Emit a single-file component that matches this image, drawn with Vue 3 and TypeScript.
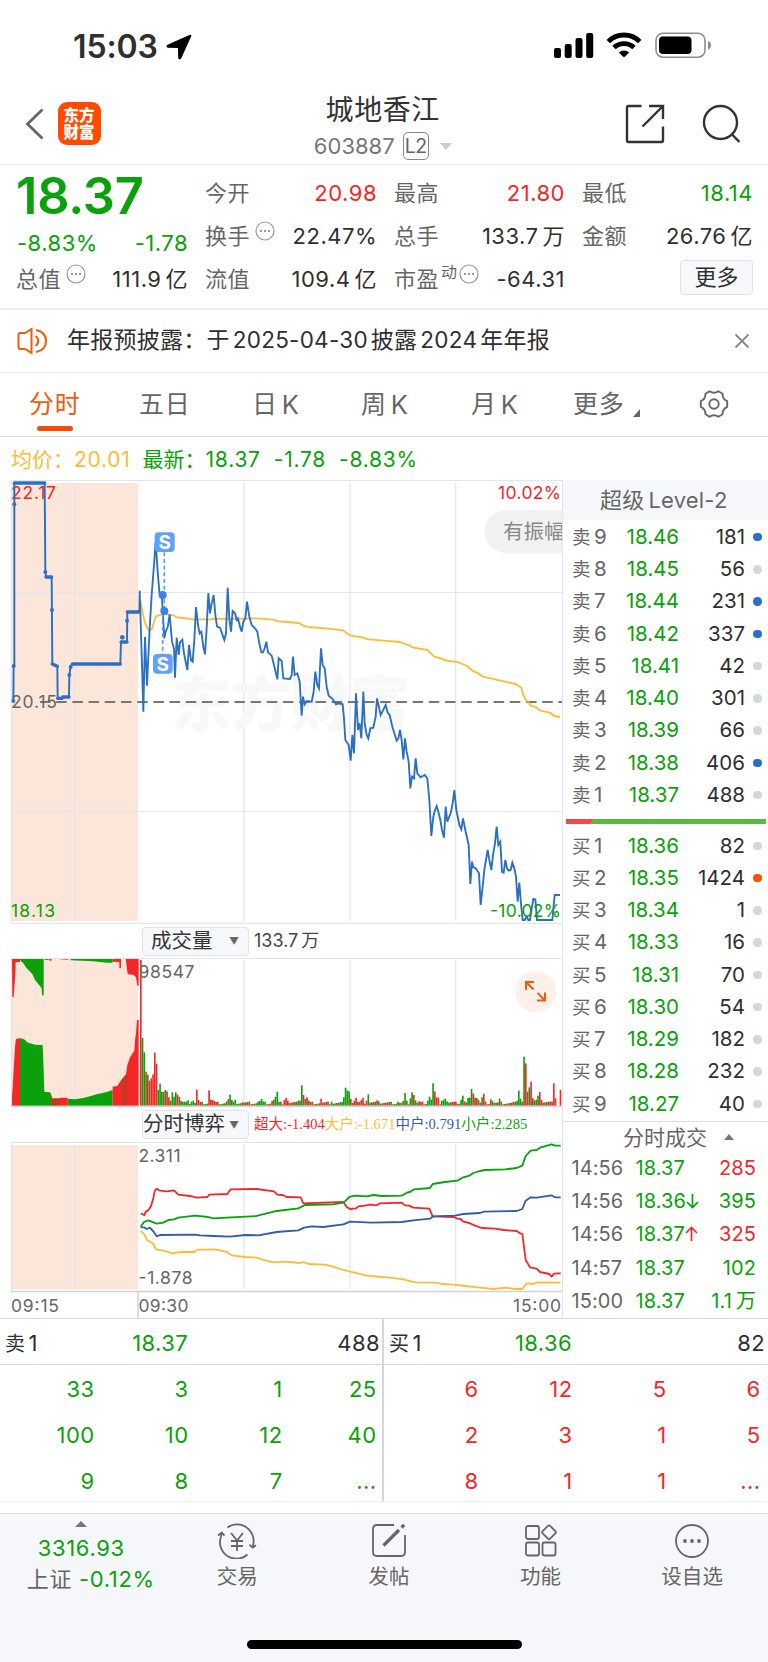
<script setup lang="ts">
interface Value { n: string; u?: string; cls?: string }
interface Stat extends Value { label: string; info?: boolean; sup?: string }
interface Order { side: string; level: number; price: string; qty: string; dot: string }

const statColumns: Stat[][] = [
  [
    { label: '今开', n: '20.98', cls: 'red' },
    { label: '换手', n: '22.47%', info: true },
    { label: '流值', n: '109.4', u: '亿' },
  ],
  [
    { label: '最高', n: '21.80', cls: 'red' },
    { label: '总手', n: '133.7', u: '万' },
    { label: '市盈', n: '-64.31', sup: '动', info: true },
  ],
  [
    { label: '最低', n: '18.14', cls: 'green' },
    { label: '金额', n: '26.76', u: '亿' },
  ],
]

const makeOrders = (side: string, rows: [number, string, string, string][]): Order[] =>
  rows.map(([level, price, qty, dot]) => ({ side, level, price, qty, dot }))

const sells = makeOrders('卖', [
  [9, '18.46', '181', 'blue'], [8, '18.45', '56', ''], [7, '18.44', '231', 'blue'],
  [6, '18.42', '337', 'blue'], [5, '18.41', '42', ''], [4, '18.40', '301', ''],
  [3, '18.39', '66', ''], [2, '18.38', '406', 'blue'], [1, '18.37', '488', ''],
])
const buys = makeOrders('买', [
  [1, '18.36', '82', ''], [2, '18.35', '1424', 'orange'], [3, '18.34', '1', ''],
  [4, '18.33', '16', ''], [5, '18.31', '70', ''], [6, '18.30', '54', ''],
  [7, '18.29', '182', ''], [8, '18.28', '232', ''], [9, '18.27', '40', ''],
])

const trades = [
  { t: '14:56', p: '18.37', a: '', q: '285', u: '', c: 'red' },
  { t: '14:56', p: '18.36', a: 'down', q: '395', u: '', c: 'green' },
  { t: '14:56', p: '18.37', a: 'up', q: '325', u: '', c: 'red' },
  { t: '14:57', p: '18.37', a: '', q: '102', u: '', c: 'green' },
  { t: '15:00', p: '18.37', a: '', q: '1.1', u: '万', c: 'green' },
]

const queues = [
  { side: '卖', price: '18.37', qty: '488', cls: 'green', cells: ['33', '3', '1', '25', '100', '10', '12', '40', '9', '8', '7', '...'] },
  { side: '买', price: '18.36', qty: '82', cls: 'red', cells: ['6', '12', '5', '6', '2', '3', '1', '5', '8', '1', '1', '...'] },
]

/* Chart data is kept at three times the drawn size and scaled down in each svg. */
const preMarket = '40,1008 41,903 43,903 43,354 134,354 136,620 138,636 155,636 157,897 165,903 172,905 173,1000 186,1000 188,996 207,996 208,930 212,903 217,897 361,897 363,831 381,831 382,741 418,741'
const price = '418,741 419,677 421,741 426,900 430,1040 435,816 441,962 449,790 455,690 462,600 467,530 473,620 479,690 486,700 493,820 497,800 503,787 509,748 516,830 522,850 525,938 530,818 536,870 540,832 547,824 552,865 562,915 567,840 573,885 578,890 583,825 588,726 594,780 599,805 604,800 610,845 615,868 620,790 625,684 630,745 635,715 641,690 646,750 651,785 660,788 667,808 673,825 678,805 683,668 688,760 693,800 698,738 705,745 710,765 714,760 720,785 725,800 730,770 736,760 741,710 748,755 755,780 765,790 772,800 778,835 784,862 789,862 794,850 799,830 804,862 815,872 822,900 832,943 836,880 845,888 850,940 870,942 875,930 879,875 884,930 892,925 899,950 905,1052 909,995 914,1018 920,1008 935,1010 941,980 946,920 952,960 957,970 963,850 968,900 974,910 980,965 986,992 998,1002 1008,1018 1016,1015 1028,1018 1032,1060 1036,1125 1046,1140 1052,1187 1057,1110 1062,1165 1068,985 1074,1095 1079,1075 1084,1120 1090,980 1094,1075 1100,1110 1105,1120 1111,1090 1120,1088 1127,1055 1131,1000 1142,1050 1152,1030 1157,1020 1163,1043 1169,1050 1177,1085 1183,1105 1190,1127 1195,1120 1200,1095 1205,1125 1210,1183 1215,1120 1220,1160 1226,1190 1231,1270 1236,1235 1242,1240 1247,1180 1252,1225 1262,1237 1274,1230 1282,1240 1288,1305 1294,1413 1300,1355 1305,1335 1310,1323 1315,1340 1321,1365 1326,1395 1332,1418 1337,1325 1342,1370 1352,1345 1358,1315 1363,1275 1369,1335 1378,1380 1384,1393 1389,1360 1398,1405 1406,1440 1411,1557 1416,1490 1420,1507 1427,1510 1437,1525 1442,1620 1448,1565 1453,1515 1458,1485 1463,1455 1468,1485 1474,1515 1479,1470 1485,1435 1490,1385 1495,1440 1501,1430 1506,1520 1511,1523 1516,1485 1521,1510 1526,1517 1532,1515 1537,1493 1543,1510 1548,1535 1553,1610 1558,1553 1563,1615 1568,1665 1574,1665 1580,1655 1585,1665 1590,1665 1596,1625 1600,1602 1606,1603 1611,1665 1657,1665 1664,1590 1680,1590'
const average = '418,741 423,715 428,745 434,770 440,785 448,798 456,792 462,770 467,755 480,750 495,745 510,750 520,751 530,757 550,759 580,763 630,763 640,761 690,762 770,760 820,764 835,769 860,771 897,774 912,783 925,786 985,791 1030,796 1040,804 1050,811 1085,817 1105,823 1152,827 1200,831 1212,836 1227,840 1237,847 1282,855 1302,874 1342,887 1372,891 1402,903 1417,917 1437,926 1449,935 1492,945 1547,957 1564,968 1570,990 1577,1004 1584,1010 1592,1022 1607,1026 1619,1036 1652,1044 1662,1053 1680,1056'

const flows = [
  { color: '#f42626', pts: '422,880 433,886 437,875 445,871 453,858 460,835 464,813 470,806 480,812 500,814 522,811 535,824 570,828 590,833 622,831 628,824 682,822 692,808 770,807 822,814 832,824 848,825 860,831 902,832 910,850 1030,846 1040,861 1050,867 1068,865 1075,859 1095,857 1110,854 1130,856 1140,850 1205,848 1215,856 1228,857 1240,863 1288,866 1298,889 1362,891 1372,896 1382,897 1390,905 1408,909 1425,917 1445,924 1485,926 1510,930 1550,933 1560,940 1567,942 1577,1020 1590,1042 1610,1046 1620,1056 1648,1062 1655,1070 1662,1061 1682,1060' },
  { color: '#ffbb35', pts: '422,933 433,943 442,961 460,971 468,988 490,992 518,1000 540,996 583,996 592,989 650,989 680,996 695,1006 735,1011 770,1013 790,1020 820,1027 860,1025 900,1029 910,1026 925,1032 975,1034 1000,1040 1030,1050 1060,1057 1100,1067 1145,1071 1165,1072 1210,1078 1245,1087 1310,1088 1325,1092 1360,1094 1395,1098 1440,1103 1480,1107 1520,1103 1545,1107 1567,1107 1580,1090 1600,1092 1612,1087 1682,1088' },
  { color: '#315ca8', pts: '422,922 432,922 440,927 450,923 460,934 470,949 480,945 585,944 600,946 640,948 690,950 735,945 775,946 830,936 895,931 912,923 935,919 970,921 1030,913 1050,905 1115,908 1205,906 1240,901 1290,896 1300,889 1365,887 1390,882 1440,879 1452,875 1550,873 1567,867 1577,842 1592,832 1610,833 1655,826 1665,832 1682,832' },
  { color: '#0aa10a', pts: '422,920 432,906 445,901 470,911 490,908 505,900 522,898 535,893 585,887 625,891 640,895 695,892 770,888 830,873 895,865 915,855 1000,853 1032,847 1048,831 1065,827 1100,829 1120,825 1145,828 1205,827 1220,818 1230,816 1242,808 1290,804 1298,792 1335,786 1372,782 1390,772 1408,767 1420,759 1440,753 1455,750 1515,748 1550,744 1567,737 1577,708 1592,692 1610,690 1620,683 1655,673 1665,677 1682,677' },
]

/* Minute volume: background noise with the listed peaks laid over it. */
const peaks: [number, number, string][] = [
  [0, 437, 'r'], [1, 203, 'g'], [2, 160, 'g'], [3, 102, 'r'], [4, 93, 'g'], [5, 75, 'r'], [6, 82, 'r'], [7, 94, 'r'], [8, 159, 'r'], [9, 125, 'r'],
  [10, 47, 'g'], [11, 66, 'g'], [12, 42, 'g'], [13, 41, 'r'], [14, 47, 'g'], [15, 43, 'r'], [16, 25, 'r'], [17, 15, 'r'], [18, 40, 'g'], [19, 27, 'g'], [20, 40, 'g'], [21, 33, 'r'], [22, 26, 'r'], [23, 14, 'g'], [24, 12, 'g'], [25, 12, 'g'], [27, 16, 'g'], [29, 12, 'g'], [30, 15, 'g'], [32, 48, 'r'], [33, 17, 'r'],
  [39, 46, 'r'], [40, 18, 'r'], [41, 17, 'r'], [42, 14, 'r'], [49, 13, 'g'], [50, 20, 'r'], [51, 33, 'g'], [52, 17, 'g'], [54, 17, 'g'], [58, 10, 'r'], [67, 12, 'g'], [68, 14, 'g'], [69, 20, 'g'], [70, 13, 'g'], [75, 14, 'g'], [76, 18, 'r'], [77, 27, 'g'], [78, 42, 'g'], [82, 17, 'r'], [83, 23, 'r'], [84, 15, 'r'], [90, 15, 'g'], [91, 15, 'g'], [92, 61, 'g'], [93, 32, 'r'], [94, 20, 'g'], [95, 25, 'r'], [96, 15, 'r'], [103, 21, 'r'], [109, 12, 'g'], [116, 25, 'g'], [117, 54, 'g'], [118, 46, 'g'], [119, 43, 'g'], [120, 20, 'r'], [122, 15, 'r'], [123, 23, 'r'], [126, 17, 'r'], [127, 23, 'r'], [129, 15, 'r'], [130, 34, 'g'], [135, 16, 'r'], [136, 13, 'g'],
  [147, 12, 'g'], [150, 14, 'g'], [151, 38, 'g'], [152, 15, 'r'], [154, 22, 'g'], [155, 40, 'g'], [156, 32, 'r'], [157, 16, 'g'], [159, 13, 'r'], [164, 15, 'g'], [165, 27, 'g'], [166, 18, 'g'], [167, 67, 'g'], [168, 43, 'r'], [169, 25, 'r'], [170, 24, 'r'], [172, 14, 'g'], [173, 18, 'g'], [174, 21, 'g'], [175, 13, 'g'], [180, 12, 'r'], [183, 17, 'g'], [184, 30, 'g'], [185, 13, 'r'], [187, 23, 'g'], [188, 24, 'g'], [189, 50, 'g'], [190, 37, 'r'], [191, 24, 'r'], [192, 23, 'g'], [193, 18, 'r'], [195, 25, 'g'], [196, 36, 'r'], [200, 19, 'r'], [201, 14, 'g'], [205, 21, 'g'], [213, 12, 'r'], [215, 15, 'g'], [216, 45, 'g'], [217, 21, 'g'], [218, 12, 'r'], [219, 147, 'g'], [220, 127, 'r'], [221, 42, 'r'], [222, 55, 'g'], [223, 72, 'r'], [224, 22, 'r'], [225, 16, 'g'], [226, 18, 'g'], [227, 30, 'g'], [228, 41, 'r'], [229, 17, 'r'], [234, 12, 'r'], [235, 12, 'r'], [236, 67, 'r'], [237, 22, 'r'],
]
const barX = (i: number) => 420 + i * 5.25
const bars = Array.from({ length: 238 }, (_, i) => {
  const up = [0, 1, 0, 0, 1, 1, 0, 1, 0, 1, 1][(i * 7) % 11]
  return { x: barX(i), h: 4 + ((i * 37) % 9), c: up ? 'r' : 'g' }
})
for (const [i, h, c] of peaks) bars[i] = { x: barX(i), h, c }
bars.push({ x: 1679, h: 47, c: 'r' })
const fills: Record<string, string> = { r: '#f42626', g: '#0aa10a' }

const auction = [
  { c: 'r', p: '36,557 36,530 38,500 42,430 46,370 48,357 60,355 60,557' },
  { c: 'g', p: '60,557 60,355 68,356 76,360 80,366 90,370 105,374 128,375 131,450 133,515 150,517 153,522 153,557' },
  { c: 'r', p: '153,557 153,522 157,535 180,535 180,533 203,533 203,557' },
  { c: 'g', p: '203,557 203,536 225,538 250,534 270,529 290,523 320,516 338,510 338,557' },
  { c: 'r', p: '338,557 338,500 352,498 360,485 370,472 378,463 382,435 390,412 403,392 405,360 408,340 411,300 416,300 416,557' },
  { c: 'r', p: '36,117 60,117 60,126 47,126 46,160 43,205 41,231 37,231' },
  { c: 'g', p: '60,117 131,117 131,226 126,226 125,205 115,192 105,180 97,162 80,145 70,130 62,122' },
  { c: 'g', p: '134,117 146,117 146,120 134,119' },
  { c: 'r', p: '148,117 155,117 155,122 148,122' },
  { c: 'r', p: '180,117 205,117 205,119 180,118' },
  { c: 'g', p: '212,117 338,117 338,128 320,128 280,124 212,121' },
  { c: 'r', p: '338,117 363,117 363,145 358,145 358,126 338,125' },
  { c: 'r', p: '377,117 416,117 416,197 412,197 408,172 400,164 383,163 380,140' },
]
const stripes = [156, 164, 172]
</script>

<template>
  <main class="screen">
    <header class="status">
      <span class="clock">15:03</span>
      <svg class="loc" width="26" height="26" viewBox="0 0 26 26"><path d="M24 .8 1.500 10.800c-1.600.8-1.200 3 .5 3l10 .3.2 9.600c0 2 2.300 2.300 3.100.6L25.200 2.200C25.600 1.200 24.900.4 24 .8z" /></svg>
      <svg class="sys" width="160" height="28" viewBox="0 0 160 28">
        <rect x="0" y="16" width="7" height="10" rx="2" /><rect x="10.700" y="12" width="7" height="14" rx="2" />
        <rect x="21.500" y="6" width="7" height="20" rx="2" /><rect x="32.200" y="1" width="7" height="25" rx="2" />
        <g fill="none" stroke="#000" stroke-width="4.800"><path d="M54.300 9.600a22 22 0 0 1 31.400 0" /><path d="M60 15.600a14.500 14.500 0 0 1 20 0" /></g>
        <path d="M64.800 20.600a7.600 7.600 0 0 1 10.400 0L70 25.600z" />
        <rect x="102" y="1.200" width="49" height="24" rx="7" fill="none" stroke="#8e8e8e" stroke-width="1.600" />
        <rect x="105" y="4.500" width="32.500" height="17.500" rx="4" /><path d="M154 9q3 1 3 4.300t-3 4.300z" fill="#8e8e8e" />
      </svg>
    </header>

    <nav class="nav">
      <svg class="back" width="20" height="34" viewBox="0 0 20 34"><path d="m17.500 2.500-15 14.500 15 14.500" fill="none" stroke="#666" stroke-width="2.800" /></svg>
      <div class="brand"><span>东方</span><span>财富</span></div>
      <div class="title">
        <h1>城地香江</h1>
        <p><span>603887</span><i class="l2">L2</i><b class="caret" /></p>
      </div>
      <svg class="share" width="40" height="40" viewBox="0 0 40 40" fill="none" stroke="#333" stroke-width="2.400"><path d="M16.500 2H3.500Q2 2 2 3.500v33Q2 38 3.500 38h33q1.500 0 1.500-1.500V22.500M24 2h14v13M37.500 2.500 17.500 22.500" /></svg>
      <svg class="search" width="40" height="40" viewBox="0 0 40 40" fill="none" stroke="#333" stroke-width="2.400"><circle cx="18.500" cy="18.500" r="16.500" /><path d="m29.500 30 8 8" /></svg>
    </nav>

    <section class="stats">
      <div class="headline">
        <strong>18.37</strong>
        <div class="line green"><span>-8.83%</span><span>-1.78</span></div>
        <div class="line"><label>总值</label><svg class="info" width="20" height="20" viewBox="0 0 20 20"><circle cx="10" cy="10" r="9" /><path d="M5 10h2m2 0h2m2 0h2" /></svg><span class="val">111.9<em>亿</em></span></div>
      </div>
      <div v-for="(col, i) in statColumns" :key="i" class="col">
        <div v-for="s in col" :key="s.label" class="cell">
          <label>{{ s.label }}</label><sup v-if="s.sup">{{ s.sup }}</sup>
          <svg v-if="s.info" class="info" :class="{ tight: s.sup }" width="20" height="20" viewBox="0 0 20 20"><circle cx="10" cy="10" r="9" /><path d="M5 10h2m2 0h2m2 0h2" /></svg>
          <span class="val" :class="s.cls">{{ s.n }}<em v-if="s.u">{{ s.u }}</em></span>
        </div>
        <button v-if="i === 2" class="more">更多</button>
      </div>
    </section>

    <section class="notice">
      <svg width="32" height="28" viewBox="0 0 32 28" fill="none" stroke="#f15b0c" stroke-width="2"><path d="M1.500 8v12q0 2 2 2H8l6.500 4V2L8 6H3.500q-2 0-2 2zM18.500 9a6 6 0 0 1 0 10M19 3q10 2 10 11t-10 11" /></svg>
      <p>年报预披露：于<span>2025-04-30</span>披露<span>2024</span>年年报</p>
      <svg class="close" width="16" height="16" viewBox="0 0 16 16" stroke="#888" stroke-width="1.800"><path d="m1.500 1.500 13 13m0-13-13 13" /></svg>
    </section>

    <section class="tabs">
      <a class="active">分时</a><a>五日</a><a>日<s>K</s></a><a>周<s>K</s></a><a>月<s>K</s></a>
      <a>更多<svg width="7" height="8" viewBox="0 0 7 8"><path d="M7 0v8H0z" fill="#666" /></svg></a>
      <svg class="gear" width="30" height="30" viewBox="0 0 30 30" fill="none" stroke="#666" stroke-width="1.900"><circle cx="15" cy="15" r="4.700" /><path d="M10.600 2.200q4.400 3 8.800 0l4.200 2.600q-.5 5 4.600 7.400v5.600q-5 2.400-4.600 7.400l-4.200 2.600q-4.400-3-8.800 0l-4.200-2.600q.5-5-4.600-7.400v-5.600q5-2.400 4.600-7.400z" stroke-linejoin="round" /></svg>
    </section>

    <section class="legend"><span class="gold">均价：</span><span class="gold n1">20.01</span><span class="n2">最新：</span><span class="n3">18.37</span><span class="n4">-1.78</span><span class="n5">-8.83%</span></section>

    <section class="market">
      <div class="charts">
        <svg class="chart" width="563" height="444" viewBox="0 480 563 444">
          <rect x="11" y="483" width="127" height="438" fill="#fce6da" />
          <g stroke="#e2e5ec" stroke-width="1.200">
            <path d="M11 480.500h552M11.300 480v443.500M11 592.500h552M11 811.500h552M11 923.400h552M74.700 483v438M243.900 483v438M350 483v438M455.700 483v438" />
          </g>
          <text class="mark" x="171" y="726" textLength="239">东方财富</text>
          <path d="M40 702H563" stroke="#777" stroke-width="1.800" stroke-dasharray="10.500 5.700" />
          <text class="tick rd" x="11" y="499" textLength="45">22.17</text>
          <text class="tick gn" x="11" y="916.500" textLength="44">18.13</text>
          <text class="tick rd" x="498" y="499" textLength="63">10.02%</text>
          <path d="M563 510h-57a21.500 21.500 0 0 0 0 43h57z" fill="#f1f1f2" />
          <text class="pill" x="503" y="539">有振幅</text>
          <g transform="translate(0 365) scale(.33333)" fill="none" stroke-linejoin="round">
            <polyline :points="average" stroke="#ffbb35" stroke-width="5.400" />
            <polyline :points="preMarket" stroke="#2b70c2" stroke-width="5.800" />
            <path d="M43 354h91M138 636h17M157 897l15 7M173 1000h13M188 996h19M217 897h144M363 831h18M382 741h36" stroke="#2b70c2" stroke-width="10" stroke-linecap="round" />
            <g fill="#2b70c2"><circle cx="43" cy="418" r="6" /><circle cx="41" cy="903" r="6" /><circle cx="40" cy="1008" r="6" /><circle cx="136" cy="621" r="6" /><circle cx="156" cy="735" r="6" /><circle cx="208" cy="930" r="6" /><circle cx="212" cy="906" r="6" /><circle cx="367" cy="817" r="7" /><circle cx="381" cy="767" r="6" /></g>
            <polyline :points="price" stroke="#2b70c2" stroke-width="5.600" stroke-linejoin="miter" />
            <path d="M493 562v176M488 745v122" stroke="#5a9cf8" stroke-width="5" stroke-dasharray="12 8" />
            <g fill="#397fee"><circle cx="488" cy="690" r="12" /><circle cx="493" cy="738" r="12" /></g>
            <g fill="#5fa1fb"><rect x="464" y="502" width="60" height="59" rx="12" /><rect x="459" y="867" width="59" height="59" rx="12" /></g>
          </g>
          <text class="flag" x="164.700" y="549">S</text><text class="flag" x="162.800" y="670.500">S</text>
          <text class="tick" x="11" y="708" textLength="46">20.15</text>
          <text class="tick gn" x="490" y="916.500" textLength="71">-10.02%</text>
        </svg>

        <div class="bar"><button>成交量<i>▼</i></button><span>133.7<em>万</em></span></div>

        <svg class="chart" width="563" height="149" viewBox="0 958 563 149">
          <rect x="11" y="959" width="127" height="147" fill="#fce6da" />
          <path d="M11.300 958v149M11 958.400h552M74.700 960v146M243.900 960v146M350 960v146M455.700 960v146" stroke="#e2e5ec" stroke-width="1.200" />
          <g transform="translate(0 920) scale(.33333)">
            <polygon v-for="(a, i) in auction" :key="i" :points="a.p" :fill="fills[a.c]" />
            <rect v-for="x in stripes" :key="x" :x="x" y="537" width="4" height="20" fill="#7a5a10" />
            <path d="M371 475v82M378 466v82" stroke="#8a5418" stroke-width="3.500" />
            <rect v-for="(b, i) in bars" :key="i" :x="b.x" :y="557 - b.h" width="4.900" :height="b.h" :fill="fills[b.c]" />
          </g>
          <path d="M11 1106.500h552" stroke="#d0d4da" stroke-width="1.500" />
          <text class="tick" x="138.500" y="977.500" textLength="56">98547</text>
          <circle cx="535.500" cy="991.500" r="20.500" fill="#fdf0ea" />
          <path d="M526 990v-8h8M526.500 982.500l7 7M545 992.500v8h-8M544.500 1000l-7-7" fill="none" stroke="#f15b0c" stroke-width="2" />
        </svg>

        <div class="bar flow">
          <button>分时博弈<i>▼</i></button>
          <p><span class="red">超大:-1.404</span><span class="gold">大户:-1.671</span><span class="navy">中户:0.791</span><span class="green">小户:2.285</span></p>
        </div>

        <svg class="chart" width="563" height="177" viewBox="0 1142 563 177">
          <rect x="11" y="1145" width="127" height="144.500" fill="#fce6da" />
          <path d="M11.300 1142v149M11 1142.500h552M74.700 1145v144M243.900 1145v144M350 1145v144M455.700 1145v144" stroke="#e2e5ec" stroke-width="1.200" />
          <path d="M11 1291.500h552M138 1291v27" stroke="#cfd2d8" stroke-width="1.500" fill="none" />
          <g transform="translate(0 920) scale(.33333)" fill="none" stroke-width="5.400" stroke-linejoin="round"><polyline v-for="f in flows" :key="f.color" :points="f.pts" :stroke="f.color" /></g>
          <text class="tick" x="138.500" y="1161.500" textLength="42">2.311</text>
          <text class="tick" x="138.500" y="1284" textLength="54">-1.878</text>
          <text class="tick" x="11" y="1312" textLength="48">09:15</text>
          <text class="tick" x="138.500" y="1312" textLength="50">09:30</text>
          <text class="tick" x="513" y="1312" textLength="48">15:00</text>
        </svg>
      </div>

      <aside class="book">
        <h2>超级<span>Level-2</span></h2>
        <ul>
          <li v-for="o in sells" :key="o.level"><span class="side">{{ o.side }}<b>{{ o.level }}</b></span><span class="price">{{ o.price }}</span><span class="qty">{{ o.qty }}</span><i :class="o.dot" /></li>
        </ul>
        <div class="ratio"><svg width="200" height="5" viewBox="0 0 200 5"><path d="M0 0h28l-3 5H0z" fill="#ef4a4a" /><path d="M28 0h172v5H25z" fill="#58bb3e" /></svg></div>
        <ul>
          <li v-for="o in buys" :key="o.level"><span class="side">{{ o.side }}<b>{{ o.level }}</b></span><span class="price">{{ o.price }}</span><span class="qty">{{ o.qty }}</span><i :class="o.dot" /></li>
        </ul>
        <div class="ticks">
          <h3>分时成交<b class="tri" /></h3>
          <div v-for="(t, i) in trades" :key="i" class="trade">
            <span class="time">{{ t.t }}</span><span class="green">{{ t.p }}</span>
            <svg width="13" height="16" viewBox="0 0 13 16" fill="none" stroke-width="1.700"><path v-if="t.a === 'down'" d="M6.500 1v13.500M1 9l5.500 5.500L12 9" stroke="#0aa10a" /><path v-if="t.a === 'up'" d="M6.500 15V1.500M1 7l5.500-5.500L12 7" stroke="#f42626" /></svg>
            <span class="amt" :class="t.c">{{ t.q }}<em v-if="t.u">{{ t.u }}</em></span>
          </div>
        </div>
      </aside>
    </section>

    <section class="queues">
      <div v-for="q in queues" :key="q.side" class="queue">
        <div class="qhead"><span>{{ q.side }}<b>1</b></span><span class="green">{{ q.price }}</span><span>{{ q.qty }}</span></div>
        <div class="qgrid" :class="q.cls"><span v-for="(c, i) in q.cells" :key="i">{{ c }}</span></div>
      </div>
    </section>

    <footer class="dock">
      <div class="index"><b class="tri" /><span class="green">3316.93</span><span>上证 <span class="green">-0.12%</span></span></div>
      <div class="item">
        <svg width="40" height="36" viewBox="0 0 40 36" fill="none" stroke="#666" stroke-width="1.800"><path d="M10.500 4.500A16.500 16.500 0 0 1 36.500 20l-.7 4.300m-3.300-2.600 3.300 2.900 3.200-2.300M30.500 31.500A16.500 16.500 0 0 1 4 13.500l.5-3.300M1 12.500l3.800-2.900 2.700 3.100M14 10l6 7.500 6-7.500M14 18h12m-12 5h12m-6-5.500V28" /></svg>
        <span>交易</span>
      </div>
      <div class="item">
        <svg width="36" height="36" viewBox="0 0 36 36" fill="none" stroke="#666" stroke-width="1.800"><path d="M23 2H6Q2 2 2 6v23q0 4 4 4h24q4 0 4-4V12" /><path d="M12.500 22.500 28 7M30.500 4.500l2.700-2.700" stroke-width="3.200" /></svg>
        <span>发帖</span>
      </div>
      <div class="item">
        <svg width="32" height="36" viewBox="0 0 32 36" fill="none" stroke="#666" stroke-width="1.800"><rect x="1" y="3" width="13" height="13" rx="2" /><rect x="1" y="19.500" width="13" height="13" rx="2" /><rect x="17.500" y="19.500" width="13" height="13" rx="2" /><rect x="18.800" y="4" width="10.500" height="10.500" rx="1.500" transform="rotate(45 24 9.200)" /></svg>
        <span>功能</span>
      </div>
      <div class="item">
        <svg width="36" height="36" viewBox="0 0 36 36" fill="none" stroke="#666" stroke-width="1.800"><circle cx="18" cy="18" r="16" /><g fill="#666" stroke="none"><circle cx="11" cy="18" r="1.900" /><circle cx="18" cy="18" r="1.900" /><circle cx="25" cy="18" r="1.900" /></g></svg>
        <span>设自选</span>
      </div>
      <div class="home" />
    </footer>
  </main>
</template>

<style>
body { margin: 0; background: #fff; }
</style>

<style scoped>
* { box-sizing: border-box; }
.screen { width: 768px; height: 1662px; overflow: hidden; background: #fff; color: #2f2f2f; font: 22px/1 Inter, "Noto Sans CJK SC", sans-serif; white-space: nowrap; }
svg { display: block; flex: none; }
h1, h2, h3, p, ul { margin: 0; padding: 0; font-weight: 400; list-style: none; }
em, i { font-style: normal; }
s { text-decoration: none; }
b { font-weight: 400; }
button { font: inherit; color: inherit; padding: 0; border: 1.500px solid #dfe2e8; border-radius: 4px; background: #f7f8fb; }
em { margin-left: 4px; }
.red { color: #f42626; }
.green { color: #0aa10a; }
.gold { color: #ffbb35; }
.navy { color: #315ca8; }

.status { height: 92px; display: flex; align-items: center; padding: 1px 0 0 73px; }
.clock { font-size: 32px; font-weight: 600; letter-spacing: -.1px; width: 92.500px; }
.loc { margin-top: 1px; }
.sys { margin: -1px 0 0 362px; }

.nav { height: 73px; display: flex; align-items: center; padding: 0 26px 0 25px; border-bottom: 1.500px solid #e9e9ec; }
.back { margin-top: -8px; }
.brand { width: 43px; height: 43px; margin: -9px 0 0 12.500px; border-radius: 9px; background: #ff4a00; color: #fff; display: flex; flex-direction: column; align-items: center; justify-content: center; font-size: 15.500px; font-weight: 900; line-height: 17px; }
.title { flex: 1; height: 73px; display: flex; flex-direction: column; align-items: center; padding-left: 26px; margin-left: 11px; margin-right: -3px; }
.title h1 { font-size: 28px; color: #333; line-height: 36px; letter-spacing: .6px; }
.title p { display: flex; align-items: center; height: 30px; margin-top: 3.500px; color: #777; }
.l2 { width: 26px; height: 28px; margin-left: 8px; border: 1.500px solid #888; border-radius: 5px; font-size: 19.500px; line-height: 26px; text-align: center; letter-spacing: -.5px; color: #666; }
.caret { margin-left: 11px; border: 6.500px solid transparent; border-top: 7px solid #ccc; border-bottom: 0; }
.share { margin: -8px 37px 0 0; }
.search { margin-top: -8px; }

.stats { height: 145px; display: grid; grid-template-columns: 171px 171px 170px 170px; column-gap: 18px; padding-left: 17px; border-bottom: 2px solid #ececef; letter-spacing: .5px; }
.headline { padding-top: 2px; }
.headline strong { display: block; height: 58px; line-height: 58px; font-size: 50.500px; font-weight: 600; color: #0aa10a; letter-spacing: -.2px; margin-left: -1px; }
.line { display: flex; align-items: center; height: 36px; justify-content: space-between; }
.line .val, .cell .val { margin-left: auto; }
.col { padding-top: 6.500px; }
.cell { display: flex; align-items: center; height: 43px; }
label { color: #666; margin-left: -1px; }
.info { margin: -10px 0 0 5px; fill: none; stroke: #999; stroke-width: 1.200; }
.info.tight { margin-left: 1px; }
.info path { stroke-width: 2; }
sup { font-size: 16px; color: #666; margin: -14px 0 0 2px; line-height: 1; }
.more { display: block; width: 73px; height: 35px; margin: 2px 0 0 auto; }

.notice { height: 63px; display: flex; align-items: center; padding: 0 18px 0 17px; border-bottom: 1.500px solid #e8e8eb; font-size: 23px; letter-spacing: .25px; }
.notice p { margin-left: 18px; flex: 1; padding-bottom: 1px; }
.notice p span { margin: 0 3px; font-size: 22.500px; }
.tabs { height: 63.500px; display: grid; grid-template-columns: 110px 113px 109px 110px 102px 126px auto; justify-content: start; align-items: center; border-bottom: 1.500px solid #d9dce1; font-size: 25px; color: #666; padding-left: 29px; letter-spacing: .7px; }
.tabs a { position: relative; display: flex; align-items: center; }
.tabs s { margin-left: 4px; font-size: 25.500px; }
.tabs a svg { margin: 18px 0 0 9px; }
.tabs .active { color: #f15b0c; }
.tabs .active::after { content: ""; position: absolute; left: 8px; top: 34px; width: 36px; height: 5.500px; border-radius: 3px; background: #f15000; }
.legend { height: 43.500px; display: flex; align-items: center; padding-left: 11px; color: #0aa10a; font-size: 21px; padding-top: 2px; }
.n1, .n3, .n4, .n5 { letter-spacing: .75px; }
.n1 { margin-right: 12px; }
.n3, .n4 { margin-right: 13px; }

.market { display: flex; height: 838px; }
.charts { width: 563px; }
.tick { font-size: 17.500px; fill: #666; }
.tick.rd { fill: #f42626; }
.tick.gn { fill: #0aa10a; }
.pill { font-size: 20.500px; fill: #888; }
.mark { font-size: 60px; font-weight: 900; fill: #f8f8f8; }
.flag { font-size: 19px; font-weight: 700; fill: #fff; text-anchor: middle; }
.bar { height: 34px; display: flex; align-items: center; padding-left: 142px; font-size: 18px; color: #444; }
.bar em { margin-left: 3px; }
.bar button { width: 107px; height: 29px; font-size: 20.500px; color: #333; display: flex; align-items: center; justify-content: space-between; padding: 0 9px 0 8px; margin-right: 5px; }
.bar i { font-size: 10px; color: #666; }
.bar.flow { height: 35px; }
.flow button { padding-left: 0; }
.flow p { font: 14.550px/1 "Liberation Serif", "Noto Sans CJK SC", serif; }

.book { width: 205px; border-left: 1.500px solid #e2e5ec; margin-left: -1px; }
.book h2 { height: 40px; width: 206px; background: #f6f7fa; color: #666; font-size: 22px; line-height: 41.500px; padding-left: 37px; letter-spacing: .2px; }
.book h2 span { margin-left: 4px; }
.book li { height: 32.250px; display: grid; grid-template-columns: 45px 62px 66px 24px; align-items: center; padding-left: 9px; font-size: 20.500px; }
.book ul { padding-top: 1px; }
.side { font-size: 18.500px; color: #666; }
.side b { font-size: 20.500px; margin-left: 3.500px; }
.price { color: #0aa10a; text-align: right; }
.qty { text-align: right; padding-left: 1px; }
.book li i { width: 8.500px; height: 8.500px; border-radius: 50%; margin-left: 8px; background: #d3d6de; }
.book li i.blue { background: #2b70c2; }
.book li i.orange { background: #ee5600; }
.ratio { height: 17.500px; padding: 8px 0 0 2.500px; }
.ticks { border-top: 1.500px solid #dcdfe4; margin-top: 1px; }
.book h3 { height: 29px; display: flex; align-items: center; padding: 1px 0 0 60px; font-size: 21px; color: #666; }
.tri { border: 5.500px solid transparent; border-bottom: 6px solid #777; border-top: 0; }
.book h3 .tri { margin-left: 17px; }
.trade { height: 33.400px; display: flex; align-items: center; padding: 0 11px 0 8.500px; font-size: 20px; letter-spacing: .1px; }
.time { width: 64px; color: #666; }
.amt { margin-left: auto; }

.queues { display: flex; height: 184px; border-top: 1.500px solid #d4d8de; border-bottom: 1.500px solid #eeeff2; letter-spacing: .4px; }
.queue { width: 383px; height: 182px; }
.queue:first-child { width: 384px; border-right: 2px solid #d4d8de; }
.qhead { display: grid; grid-template-columns: 88px 95px 1fr; height: 45.500px; align-items: center; padding: 3px 2px 0 5px; border-bottom: 1.500px solid #d4d8de; font-size: 22px; }
.qhead span:first-child { font-size: 20px; }
.qhead b { font-size: 22px; margin-left: 3px; }
.qhead span + span { text-align: right; }
.qgrid { display: grid; grid-template-columns: 94.500px repeat(3, 94px); grid-auto-rows: 46px; padding-top: 1.500px; align-items: center; text-align: right; }

.dock { position: relative; height: 150px; margin-top: 11px; border-top: 1.500px solid #dbdee3; background: #f6f7fa; display: flex; align-items: flex-start; color: #666; }
.index { width: 161px; margin-left: 1px; display: flex; flex-direction: column; align-items: center; padding-top: 7px; letter-spacing: .65px; }
.index > span { line-height: 31px; white-space: pre; }
.index > .tri { margin-bottom: 6px; border-left-width: 6.500px; border-right-width: 6.500px; }
.index > span:last-child { padding-left: 19px; }
.item { width: 152px; display: flex; flex-direction: column; align-items: center; padding-top: 9px; font-size: 20.500px; letter-spacing: .2px; }
.item span { margin-top: 8px; }
.home { position: absolute; left: 247px; bottom: 14px; width: 275px; height: 9px; border-radius: 5px; background: #000; }
</style>
